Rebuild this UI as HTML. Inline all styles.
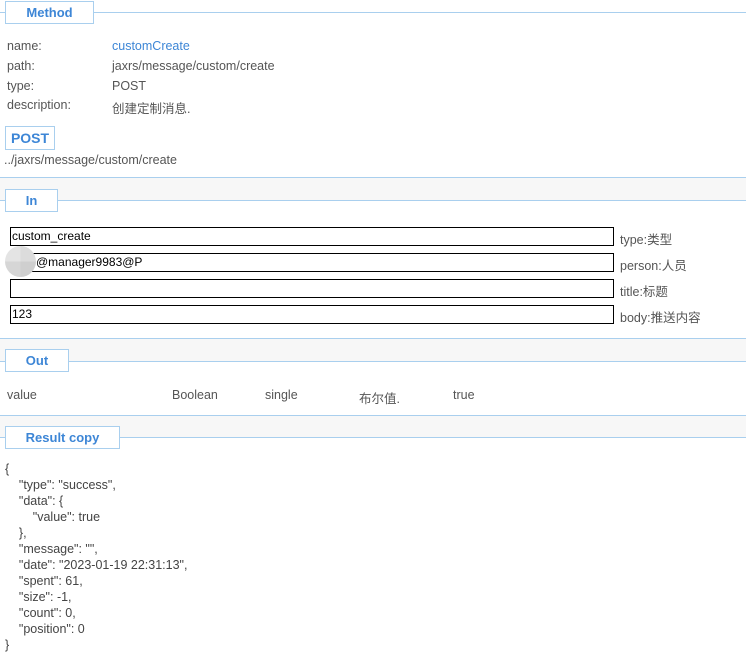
<!DOCTYPE html>
<html><head><meta charset="utf-8"><style>
*{margin:0;padding:0;box-sizing:border-box}
body{width:746px;height:659px;overflow:hidden;background:#fff;font-family:"Liberation Sans","Noto Sans CJK SC",sans-serif;font-size:12.5px;color:#555;position:relative}
.a{position:absolute;white-space:nowrap}
.band{position:absolute;left:0;width:746px;height:23px;background:#f7f7f7;border-top:1px solid #a9cfee}
.hl{position:absolute;left:0;width:746px;height:1px;background:#a9cfee}
.leg{position:absolute;left:5px;background:#fff;border:1px solid #a9cfee;color:#3d86d6;font-weight:bold;font-size:13px;text-align:center;height:23px;line-height:21px}
.inp{position:absolute;left:10px;width:604px;height:19px;border:1px solid #000;color:#000;font-size:12px;line-height:17px;padding-left:1px;background:#fff}
.lbl{position:absolute;left:620px;font-size:12.5px;color:#555}
.j{position:absolute;left:5px;top:461px;line-height:16px;font-size:12.5px;color:#444;white-space:pre}
</style></head><body>
<div class="hl" style="top:12px"></div>
<div class="leg" style="top:1px;width:89px">Method</div>
<div class="a" style="left:7px;top:39px">name:</div><div class="a" style="left:112px;top:39px;color:#3d86d6">customCreate</div>
<div class="a" style="left:7px;top:59px">path:</div><div class="a" style="left:112px;top:59px">jaxrs/message/custom/create</div>
<div class="a" style="left:7px;top:79px">type:</div><div class="a" style="left:112px;top:79px">POST</div>
<div class="a" style="left:7px;top:98px">description:</div><div class="a" style="left:112px;top:98px">创建定制消息.</div>
<div class="a" style="left:5px;top:126px;width:50px;height:24px;border:1px solid #a9cfee;color:#3d86d6;font-weight:bold;font-size:14px;text-align:center;line-height:22px">POST</div>
<div class="a" style="left:4px;top:153px">../jaxrs/message/custom/create</div>

<div class="band" style="top:177px"></div><div class="hl" style="top:200px"></div>
<div class="leg" style="top:189px;width:53px">In</div>
<div class="inp" style="top:227px">custom_create</div><div class="lbl" style="top:229px">type:类型</div>
<div class="inp" style="top:253px;padding-left:25px">@manager9983@P</div><div class="lbl" style="top:255px">person:人员</div>
<div class="a" style="left:5px;top:246px;width:31px;height:31px;border-radius:50%;background:conic-gradient(#dcdcdc 0 25%,#cfcfcf 25% 50%,#d6d6d6 50% 75%,#e4e4e4 75%)"></div>
<div class="inp" style="top:279px"></div><div class="lbl" style="top:281px">title:标题</div>
<div class="inp" style="top:305px">123</div><div class="lbl" style="top:307px">body:推送内容</div>

<div class="band" style="top:338px"></div><div class="hl" style="top:361px"></div>
<div class="leg" style="top:349px;width:64px">Out</div>
<div class="a" style="left:7px;top:388px">value</div>
<div class="a" style="left:172px;top:388px">Boolean</div>
<div class="a" style="left:265px;top:388px">single</div>
<div class="a" style="left:359px;top:388px">布尔值.</div>
<div class="a" style="left:453px;top:388px">true</div>

<div class="band" style="top:415px"></div><div class="hl" style="top:437px"></div>
<div class="leg" style="top:426px;width:115px">Result copy</div>
<div class="j">{
    "type": "success",
    "data": {
        "value": true
    },
    "message": "",
    "date": "2023-01-19 22:31:13",
    "spent": 61,
    "size": -1,
    "count": 0,
    "position": 0
}</div>
</body></html>
